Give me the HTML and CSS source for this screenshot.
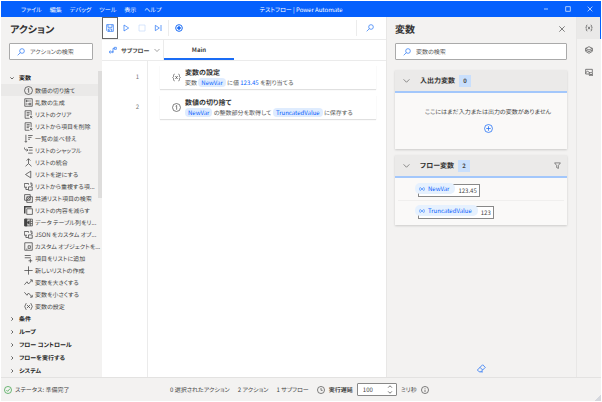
FILE: index.html
```html
<!DOCTYPE html>
<html lang="ja">
<head>
    <meta charset="UTF-8">
    <meta name="viewport" content="width=device-width, initial-scale=1.0">
    <title>テストフロー | Power Automate</title>
    <link rel="stylesheet" href="styles.css">
</head>
<body>
    <header class="titlebar">
        <nav class="menu">
            <button>ファイル</button>
            <button>編集</button>
            <button>デバッグ</button>
            <button>ツール</button>
            <button>表示</button>
            <button>ヘルプ</button>
        </nav>
        <div class="window-title">テストフロー | Power Automate</div>
        <div class="window-controls">
            <button aria-label="最小化"><svg viewBox="0 0 12 12"><path d="M3 6h6"/></svg></button>
            <button aria-label="最大化"><svg viewBox="0 0 12 12"><path d="M2.500 2.500h7v7h-7z"/></svg></button>
            <button aria-label="閉じる"><svg viewBox="0 0 12 12"><path d="M2.500 2.500l7 7M9.500 2.500l-7 7"/></svg></button>
        </div>
    </header>

    <div class="workspace">
        <aside class="actions">
            <h2>アクション</h2>
            <label class="search">
                <svg viewBox="0 0 12 12"><circle cx="7.500" cy="4.500" r="3.500"/><path d="M5 7l-4 4"/></svg>
                <input type="text" placeholder="アクションの検索" aria-label="アクションの検索">
            </label>
            <div class="tree">
                <div class="tree-content">
                    <button class="group"><svg viewBox="0 0 12 12"><path d="M1 4l5 5 5-5"/></svg>変数</button>
                    <ul class="action-list">
                        <li><button class="action selected"><svg viewBox="0 0 12 12"><circle cx="6" cy="6" r="5.300"/><path d="M4.800 4.300l1.400-1v5.700"/></svg><span>数値の切り捨て</span></button></li>
                        <li><button class="action"><svg viewBox="0 0 12 12"><path d="M1 1h10v10h-10zM3 3h1v2h-1zM8 3v2M3 7v2M7 7h2v2h-2zM5.500 3v2M5.500 7v2"/></svg><span>乱数の生成</span></button></li>
                        <li><button class="action"><svg viewBox="0 0 12 12"><path d="M7 11h-5.500v-10h8v6M3.500 3.500h4M3.500 5.500h4M3.500 7.500h3M8 8l3 3M11 8l-3 3"/></svg><span>リストのクリア</span></button></li>
                        <li><button class="action"><svg viewBox="0 0 12 12"><path d="M7 11h-5.500v-10h8v6M3.500 3.500h4M3.500 5.500h4M3.500 7.500h3M8 8l3 3M11 8l-3 3"/></svg><span>リストから項目を削除</span></button></li>
                        <li><button class="action"><svg viewBox="0 0 12 12"><path d="M2.500 1v10M1 9.500l1.500 1.500 1.500-1.500M5.500 2h6M5.500 4.500h4.500M5.500 7h2.500"/></svg><span>一覧の並べ替え</span></button></li>
                        <li><button class="action"><svg viewBox="0 0 12 12"><path d="M5.500 2h6M6.500 5.500h5M5.500 9.500h6M.5 2c0 3 1 3.500 4.500 3.500M3.500 4l1.700 1.500-1.700 1.500"/></svg><span>リストのシャッフル</span></button></li>
                        <li><button class="action"><svg viewBox="0 0 12 12"><path d="M6 1v6.500l-4 3.500M6 7.500l4 3.500M3.500 3.500l2.500-2.500 2.500 2.500"/></svg><span>リストの統合</span></button></li>
                        <li><button class="action"><svg viewBox="0 0 12 12"><path d="M9 1.500v9l-7-4.500z"/></svg><span>リストを逆にする</span></button></li>
                        <li><button class="action"><svg viewBox="0 0 12 12"><path d="M4 7h-3.500v-5h5.500v1.500M6 6.500h5v4.500h-5zM2.500 7v3h3M8 1.500h2.500v3M9 3.500l1.500 1.500 1.300-1.500"/></svg><span>リストから重複する項...</span></button></li>
                        <li><button class="action"><svg viewBox="0 0 12 12"><path d="M.8.8h7.500v7.500h-7.500zM3.700 3.700h7.500v7.500h-7.500zM3.700 6l2.300-2.300M3.700 8.300l4.600-4.600M6 8.300l2.300-2.300"/></svg><span>共通リスト項目の検索</span></button></li>
                        <li><button class="action"><svg viewBox="0 0 12 12"><path d="M3.700 3.700h7.500v7.500h-7.500z"/><path class="heavy" d="M2 9h-1v-8h8v1"/></svg><span>リストの内容を減らす</span></button></li>
                        <li><button class="action"><svg viewBox="0 0 12 12"><path d="M.8 1.500h10.400v9h-10.400zM8.500 1.500v9M8.500 4.500h2.700M8.500 7.500h2.700"/><path class="solid" d="M1 1.500h3v9h-3zM7 3.500v5l-3-2.500z"/></svg><span>データ テーブル列をリ...</span></button></li>
                        <li><button class="action"><svg viewBox="0 0 12 12"><path d="M4 7h-3.500v-5h5.500v1.500M6 6.500h5v4.500h-5zM2.500 7v3h3M8 1.500h2.500v3M9 3.500l1.500 1.500 1.300-1.500"/></svg><span>JSON をカスタム オブ...</span></button></li>
                        <li><button class="action"><svg viewBox="0 0 12 12"><path d="M1 1h10v10h-10zM5.500 5h3v3.500h-3zM3 9.500h1.500"/></svg><span>カスタム オブジェクトを...</span></button></li>
                        <li><button class="action"><svg viewBox="0 0 12 12"><path d="M1 2h8M1 5h8M8.500 6.500v5M6 9h5"/></svg><span>項目をリストに追加</span></button></li>
                        <li><button class="action"><svg viewBox="0 0 12 12"><path d="M6 .5v11M.5 6h11"/></svg><span>新しいリストの作成</span></button></li>
                        <li><button class="action"><svg viewBox="0 0 12 12"><path d="M.5 9l3.500-4 2 3 4.500-5M8 2.500h3v3"/></svg><span>変数を大きくする</span></button></li>
                        <li><button class="action"><svg viewBox="0 0 12 12"><path d="M.5 3l3.500 4 2-3 4.500 5M8 9.500h3v-3"/></svg><span>変数を小さくする</span></button></li>
                        <li><button class="action"><svg viewBox="0 0 12 12"><path d="M3 1.500q-4 4.500 0 9M9 1.500q4 4.500 0 9M4 4l4 4M8 4l-4 4"/></svg><span>変数の設定</span></button></li>
                    </ul>
                    <button class="group"><svg viewBox="0 0 12 12"><path d="M4 1l5 5-5 5"/></svg>条件</button>
                    <button class="group"><svg viewBox="0 0 12 12"><path d="M4 1l5 5-5 5"/></svg>ループ</button>
                    <button class="group"><svg viewBox="0 0 12 12"><path d="M4 1l5 5-5 5"/></svg>フロー コントロール</button>
                    <button class="group"><svg viewBox="0 0 12 12"><path d="M4 1l5 5-5 5"/></svg>フローを実行する</button>
                    <button class="group"><svg viewBox="0 0 12 12"><path d="M4 1l5 5-5 5"/></svg>システム</button>
                </div>
                <div class="scrollbar"></div>
            </div>
        </aside>

        <main class="designer">
            <div class="toolbar">
                <button class="save" aria-label="保存"><svg viewBox="0 0 12 12"><path d="M1 1h10v10h-8.500l-1.500-1.500zM3 1v4h6v-4M3.500 11v-3.500h5v3.500M5 9v2"/></svg></button>
                <button aria-label="実行"><svg viewBox="0 0 12 12"><path d="M3 1.500v9l7-4.500z"/></svg></button>
                <button class="disabled" aria-label="停止" disabled><svg viewBox="0 0 12 12"><path d="M1.500 1.500h9v9h-9z"/></svg></button>
                <button aria-label="次のアクションを実行"><svg viewBox="0 0 12 12"><path d="M2 2v8l6-4zM10.500 1.500v9"/></svg></button>
                <button class="record" aria-label="レコーダー"><svg viewBox="0 0 12 12"><circle cx="6" cy="6" r="5"/><circle class="solid" cx="6" cy="6" r="2"/></svg></button>
                <button class="find" aria-label="検索"><svg viewBox="0 0 12 12"><circle cx="7.500" cy="4.500" r="3.500"/><path d="M5 7l-4 4"/></svg></button>
            </div>
            <div class="tabs">
                <button class="subflows">
                    <svg class="flow" viewBox="0 0 12 12"><circle cx="2" cy="9" r="1.500"/><circle cx="5.500" cy="9" r="1"/><path d="M6 8.500v-5h2M8 2h3v3h-3z"/></svg>
                    サブフロー
                    <svg class="chevron" viewBox="0 0 12 12"><path d="M1 4l5 5 5-5"/></svg>
                </button>
                <button class="tab">Main</button>
            </div>
            <div class="canvas">
                <ol class="line-numbers">
                    <li>1</li>
                    <li>2</li>
                </ol>
                <div class="steps">
                    <article class="step">
                        <svg viewBox="0 0 12 12"><path d="M3.500 1.500q-1.500 0-1.500 2v1.500l-1 1 1 1v1.500q0 2 1.500 2M8.500 1.500q1.500 0 1.500 2v1.500l1 1-1 1v1.500q0 2-1.500 2M4.500 4l3 4M7.500 4l-3 4"/></svg>
                        <div>
                            <h3>変数の設定</h3>
                            <p>変数 <span class="pill">NewVar</span> に値 <span class="value">123.45</span> を割り当てる</p>
                        </div>
                    </article>
                    <article class="step">
                        <svg viewBox="0 0 12 12"><circle cx="6" cy="6" r="5.300"/><path d="M4.800 4.300l1.400-1v5.700"/></svg>
                        <div>
                            <h3>数値の切り捨て</h3>
                            <p><span class="pill">NewVar</span> の整数部分を取得して <span class="pill">TruncatedValue</span> に保存する</p>
                        </div>
                    </article>
                </div>
            </div>
        </main>

        <aside class="variables">
            <div class="panel-title">
                <h2>変数</h2>
                <button aria-label="閉じる"><svg viewBox="0 0 12 12"><path d="M2 2l8 8M10 2l-8 8"/></svg></button>
            </div>
            <label class="search">
                <svg viewBox="0 0 12 12"><circle cx="7.500" cy="4.500" r="3.500"/><path d="M5 7l-4 4"/></svg>
                <input type="text" placeholder="変数の検索" aria-label="変数の検索">
            </label>
            <section class="var-card">
                <header>
                    <svg viewBox="0 0 12 12"><path d="M1 4l5 5 5-5"/></svg>
                    <h3>入出力変数</h3>
                    <span class="count">0</span>
                </header>
                <div class="empty">
                    <p>ここにはまだ入力または出力の変数がありません</p>
                    <button aria-label="追加"><svg viewBox="0 0 12 12"><circle cx="6" cy="6" r="5.300"/><path d="M6 3v6M3 6h6"/></svg></button>
                </div>
            </section>
            <section class="var-card">
                <header>
                    <svg viewBox="0 0 12 12"><path d="M1 4l5 5 5-5"/></svg>
                    <h3>フロー変数</h3>
                    <span class="count">2</span>
                    <button class="filter" aria-label="フィルター"><svg viewBox="0 0 12 12"><path d="M1 1.500h10l-3.500 4.500v5l-3-1.500v-3.500z"/></svg></button>
                </header>
                <ul class="var-list">
                    <li><div class="var"><span class="var-name"><svg viewBox="0 0 12 12"><path d="M3 2q-4 4 0 8M9 2q4 4 0 8M4 4l4 4M8 4l-4 4"/></svg>NewVar</span><span>123.45</span></div></li>
                    <li><div class="var"><span class="var-name"><svg viewBox="0 0 12 12"><path d="M3 2q-4 4 0 8M9 2q4 4 0 8M4 4l4 4M8 4l-4 4"/></svg>TruncatedValue</span><span>123</span></div></li>
                </ul>
            </section>
            <button class="clear" aria-label="値を消去"><svg viewBox="0 0 12 12"><path d="M7.500 1l3.500 3.500-6 6h-2l-2.500-2.500zM4 4.500l3.500 3.500M5 10.500h3"/></svg></button>
        </aside>

        <nav class="rail">
            <button class="active" aria-label="変数"><svg viewBox="0 0 12 12"><path d="M3.500 1.500q-1.500 0-1.500 2v1.500l-1 1 1 1v1.500q0 2 1.500 2M8.500 1.500q1.500 0 1.500 2v1.500l1 1-1 1v1.500q0 2-1.500 2M4.500 4l3 4M7.500 4l-3 4"/></svg></button>
            <button aria-label="UI 要素"><svg viewBox="0 0 12 12"><path d="M6 1l5 2.500-5 2.500-5-2.500zM1 3.500v4.500l5 3 5-3v-4.500M1 6l5 2.500 5-2.500"/></svg></button>
            <button aria-label="画像"><svg viewBox="0 0 12 12"><path d="M6 9h-5v-7h10v4M1 7l3-2.500 3 3M6.500 7h5v4h-5zM7 11l2-2 2 2"/></svg></button>
        </nav>
    </div>

    <footer class="statusbar">
        <div class="status">
            <svg class="ok" viewBox="0 0 12 12"><circle cx="6" cy="6" r="5.300"/><path d="M3.500 6l2 2 3.500-4"/></svg>
            ステータス: 準備完了
        </div>
        <div class="stats">
            <span>0 選択されたアクション</span>
            <span>2 アクション</span>
            <span>1 サブフロー</span>
        </div>
        <div class="delay">
            <svg viewBox="0 0 12 12"><circle cx="6" cy="6" r="5.300"/><path d="M6 3v3.500h2.500"/></svg>
            <label for="delay">実行遅延</label>
            <div class="number">
                <input type="number" id="delay" value="100">
                <svg viewBox="0 0 8 12"><path d="M1.500 3.500l2.500-2.500 2.500 2.500M1.500 8.500l2.500 2.500 2.500-2.500"/></svg>
            </div>
            <span>ミリ秒</span>
            <svg viewBox="0 0 12 12"><circle cx="6" cy="6" r="5.300"/><path d="M6 5.500v3.500M6 3v1"/></svg>
        </div>
        <div class="grip"></div>
    </footer>
</body>
</html>
```

FILE: styles.css
```css
* {
    box-sizing: border-box;
}
body {
    font-family: "Noto Sans CJK JP", sans-serif;
    font-feature-settings: "palt";
    text-rendering: geometricPrecision;
    font-size: 6px;
    line-height: 9px;
    color: #444;
    background-color: white;
    margin: 0;
    padding: 1px;
    height: 100vh;
    display: flex;
    flex-direction: column;
    overflow: hidden;
}
h2, h3, p, ul, ol {
    margin: 0;
    padding: 0;
    list-style: none;
}
h2 {
    font-size: 10px;
    line-height: 14px;
    font-weight: bold;
    color: #333;
}
h3 {
    font-size: 7px;
    line-height: 10px;
    font-weight: bold;
    color: #333;
}
button, input {
    font: inherit;
    font-feature-settings: inherit;
    text-rendering: inherit;
    color: inherit;
    background: none;
    border: none;
    padding: 0;
    margin: 0;
    min-width: 0;
}
button {
    display: flex;
    align-items: center;
    white-space: nowrap;
    cursor: pointer;
}
svg {
    width: 8px;
    height: 8px;
    flex: none;
    fill: none;
    stroke: currentColor;
    stroke-width: 1;
}
.solid {
    fill: currentColor;
}
.heavy {
    stroke-width: 2;
}

/* Title bar */
.titlebar {
    display: grid;
    grid-template-columns: 1fr auto 1fr;
    align-items: center;
    height: 16px;
    background-color: #0560fd;
    color: white;
}
.menu {
    display: flex;
    gap: 8px;
    padding-left: 20px;
}
.window-controls {
    display: flex;
    justify-content: flex-end;
    gap: 14px;
    padding-right: 7px;
}

/* Columns */
.workspace {
    flex: 1;
    display: flex;
    min-height: 0;
    background-color: #f3f2f1;
}
.search {
    display: flex;
    align-items: center;
    gap: 5px;
    height: 17px;
    padding: 0 7px;
    border: 1px solid #aaa;
    border-radius: 1px;
    background-color: white;
}
.search svg {
    color: #1a6cf5;
}
.search input {
    flex: 1;
    outline: none;
}
.search input::placeholder {
    color: #555;
}

/* Action pane */
.actions {
    width: 101px;
    display: flex;
    flex-direction: column;
    padding-top: 5px;
}
.actions h2 {
    padding-left: 9px;
}
.actions .search {
    margin: 7px 9px 11px 8px;
}
.tree {
    flex: 1;
    display: flex;
    min-height: 0;
    overflow: hidden;
}
.tree-content {
    flex: 1;
    min-width: 0;
}
.scrollbar {
    width: 4px;
    height: 127px;
    background-color: #dedddc;
}
.group {
    width: 100%;
    height: 13px;
    gap: 5px;
    padding-left: 9px;
    font-weight: 600;
    color: #222;
}
.group svg {
    width: 4px;
    height: 4px;
    stroke-width: 2;
}
.action {
    width: 100%;
    height: 12px;
    gap: 2px;
    padding-left: 23px;
}
.action svg {
    width: 9px;
    height: 9px;
}
.selected {
    background-color: #eae9e8;
}

/* Designer */
.designer {
    flex: 1;
    min-width: 0;
    display: flex;
    flex-direction: column;
    background-color: white;
}
.toolbar {
    display: flex;
    height: 23px;
    border-bottom: 1px solid #ebebeb;
    color: #1a6cf5;
}
.toolbar button {
    width: 16px;
    justify-content: center;
}
.toolbar .save {
    border: 1px solid #666;
}
.toolbar .disabled {
    color: #c4dafb;
}
.toolbar .record {
    width: 20px;
    margin: 3px 0 3px 2px;
    border-left: 1px solid #ececec;
}
.record svg {
    stroke-width: 1.5;
}
.toolbar .find {
    width: 30px;
    margin: 3px 0 3px auto;
    padding-right: 4px;
    border-left: 1px solid #ececec;
}
.tabs {
    display: flex;
    height: 21px;
    border-bottom: 1px solid #ebebeb;
}
.subflows {
    width: 62px;
    gap: 4px;
    padding-left: 7px;
    border-right: 1px solid #ebebeb;
    font-weight: 600;
}
.subflows .flow {
    color: #1a6cf5;
}
.subflows .chevron {
    width: 6px;
    height: 6px;
    margin-left: 1px;
}
.tab {
    width: 70px;
    justify-content: center;
    border-bottom: 2px solid #1a6cf5;
    font-weight: 600;
}
.canvas {
    flex: 1;
    display: flex;
}
.line-numbers {
    width: 46px;
    padding: 1px 8px 0 0;
    border-right: 1px solid #ebebeb;
    text-align: right;
    color: #777;
}
.line-numbers li {
    height: 30px;
    line-height: 30px;
}
.steps {
    flex: 1;
    display: flex;
    flex-direction: column;
    gap: 6px;
    padding: 4px 10px 0 12px;
}
.step {
    display: flex;
    align-items: center;
    gap: 4px;
    height: 24px;
    padding-left: 12px;
    box-shadow: 0 1px 1px rgba(0, 0, 0, 0.12);
    white-space: nowrap;
    color: #555;
}
.step svg {
    width: 9px;
    height: 9px;
}
.pill {
    padding: 0 3px;
    border-radius: 4px;
    background-color: #dfecfe;
    color: #0560fd;
}
.value {
    color: #0560fd;
}

/* Variables pane */
.variables {
    width: 191px;
    display: flex;
    flex-direction: column;
    padding: 5px 9px 4px 8px;
    border-left: 1px solid #e8e7e6;
    border-right: 1px solid #e8e7e6;
}
.panel-title {
    display: flex;
    justify-content: space-between;
    padding-right: 1px;
}
.variables .search {
    margin: 7px 0 10px;
}
.var-card {
    margin-bottom: 6px;
    background-color: #faf9f8;
    box-shadow: 0 1px 2px rgba(0, 0, 0, 0.16);
}
.var-card header {
    display: flex;
    align-items: center;
    height: 23px;
    padding: 0 6px 0 8px;
    border-bottom: 2px solid #a3c7fb;
    background-color: #ebeae9;
}
.var-card header svg {
    width: 7px;
    height: 7px;
}
.var-card h3 {
    margin-left: 10px;
}
.count {
    width: 12px;
    margin-left: 4px;
    line-height: 12px;
    background-color: #c9dffc;
    text-align: center;
    font-weight: 600;
}
.filter {
    margin-left: auto;
}
.empty {
    display: flex;
    flex-direction: column;
    align-items: center;
    gap: 8px;
    height: 56px;
    padding: 14px 0 0 14px;
}
.empty button {
    color: #1a6cf5;
}
.empty svg {
    width: 9px;
    height: 9px;
}
.var-list {
    padding: 1px 3px 4px;
}
.var-list li {
    display: flex;
    height: 21px;
    padding: 5px 0 0 20px;
}
.var-list li + li {
    border-top: 1px solid #f0efee;
}
.var {
    display: flex;
    height: 13px;
    padding-right: 2px;
    border: 1px solid #888;
    background-color: white;
    line-height: 12px;
}
.var-name {
    display: flex;
    align-items: center;
    gap: 3px;
    height: 11px;
    margin: -2px 3px 0 -4px;
    padding: 0 6px 0 4px;
    border-radius: 5px;
    background-color: #e6f1fe;
    color: #0560fd;
}
.var-name svg {
    width: 6px;
    height: 6px;
}
.clear {
    align-self: center;
    margin-top: auto;
    color: #1a6cf5;
}
.clear svg {
    width: 9px;
    height: 9px;
}

/* Right rail */
.rail {
    width: 24px;
}
.rail button {
    width: 100%;
    height: 22px;
    justify-content: center;
}
.rail .active {
    border-right: 1px solid #0560fd;
    background-color: #eae9e8;
}

/* Status bar */
.statusbar {
    display: flex;
    align-items: center;
    height: 24px;
    padding-left: 3px;
    border-top: 1px solid #e3e2e1;
    background-color: #f3f2f1;
    white-space: nowrap;
}
.status {
    width: 166px;
    display: flex;
    align-items: center;
    gap: 3px;
}
.status .ok {
    color: #2c9a3a;
}
.stats {
    display: flex;
    gap: 8px;
}
.delay {
    display: flex;
    align-items: center;
    gap: 4px;
    margin-left: 8px;
}
.delay label {
    font-weight: 600;
}
.number {
    display: flex;
    align-items: center;
    width: 40px;
    height: 13px;
    padding: 0 3px 0 5px;
    border: 1px solid #888;
    border-radius: 1px;
    background-color: white;
}
.number input {
    flex: 1;
    appearance: textfield;
    outline: none;
}
.number input::-webkit-inner-spin-button {
    display: none;
}
.number svg {
    width: 6px;
    height: 9px;
}
.grip {
    align-self: flex-end;
    width: 6px;
    height: 6px;
    margin-left: auto;
    background: linear-gradient(135deg, transparent 50%, #d5d8de 50%);
}
```
